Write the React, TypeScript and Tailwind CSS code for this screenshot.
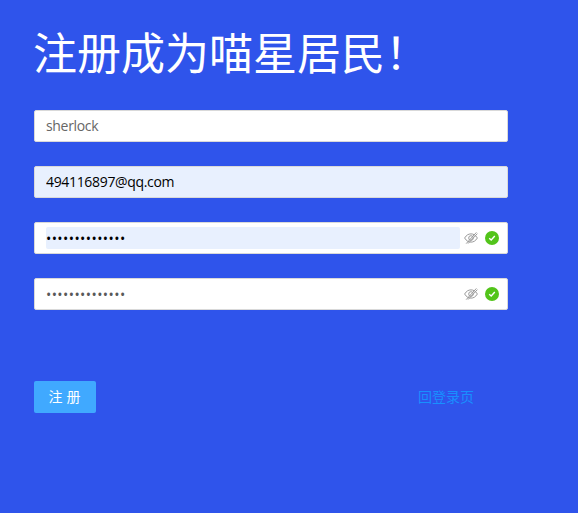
import React from "react";

const font = { fontFamily: '"Open Sans", "Noto Sans CJK SC", sans-serif' };

function Eye() {
  return (
    <svg width="14" height="14" viewBox="0 0 14 14" fill="none" stroke="#9a9a9a" strokeWidth="1" className="shrink-0">
      <path d="M0.6 7 C2.5 3.9 4.6 2.9 7 2.9 C9.4 2.9 11.5 3.9 13.4 7 C11.5 10.1 9.4 11.1 7 11.1 C4.6 11.1 2.5 10.1 0.6 7 Z" />
      <circle cx="7" cy="7" r="2.3" />
      <path d="M2.2 12.6 L12.4 1.4 M4 12.6 L13.4 2.6" />
    </svg>
  );
}

function Check() {
  return (
    <span className="w-[14px] h-[14px] rounded-full bg-[#52c41a] flex items-center justify-center shrink-0">
      <svg width="8" height="8" viewBox="0 0 8 8" fill="none" stroke="#fff" strokeWidth="1.4">
        <path d="M1.2 4.2 L3.2 6 L6.8 2" />
      </svg>
    </span>
  );
}

function PasswordRow({ autofill }: { autofill?: boolean }) {
  return (
    <div className="h-8 w-[474px] bg-white rounded-[2px] border border-[#d9d9d9] flex items-center pl-[11px] pr-[8px]">
      <input
        readOnly
        type="password"
        value="sherlock123456"
        className={`h-[22px] w-[414px] outline-none text-sm tracking-[0.42px] rounded-[2px] ${autofill ? "bg-[#e8f0fe] text-black" : "bg-white text-[#595959]"}`}
        style={font}
      />
      <span className="ml-[4px] mr-[7px] flex"><Eye /></span>
      <Check />
    </div>
  );
}

export default function App() {
  return (
    <div className="w-[578px] h-[513px] bg-[#2f54eb] pl-[34px] overflow-hidden" style={font}>
      <h1 className="text-[44px] leading-[62px] text-white pt-[22px] h-[84px] whitespace-nowrap font-normal -ml-px">注册成为喵星居民！</h1>
      <div className="mt-[26px] flex flex-col gap-6">
        <input
          readOnly
          value="sherlock"
          className="h-8 w-[474px] bg-white rounded-[2px] border border-[#d9d9d9] pl-[11px] pr-[11px] pb-[2px] text-sm tracking-[-0.33px] text-[#666666] outline-none"
          style={font}
        />
        <input
          readOnly
          value="494116897@qq.com"
          className="h-8 w-[474px] bg-[#e8f0fe] rounded-[2px] border border-[#d9d9d9] pl-[11px] pr-[11px] pb-[2px] text-sm tracking-[-0.33px] text-black outline-none"
          style={font}
        />
        <PasswordRow autofill />
        <PasswordRow />
      </div>
      <div className="mt-[71px] flex items-center w-[474px]">
        <button className="h-8 w-[62px] rounded-[2px] bg-[#40a9ff] text-white text-sm tracking-[4px] pl-[3px]">注册</button>
        <span className="ml-[322px] text-sm text-[#1890ff]">回登录页</span>
      </div>
    </div>
  );
}
